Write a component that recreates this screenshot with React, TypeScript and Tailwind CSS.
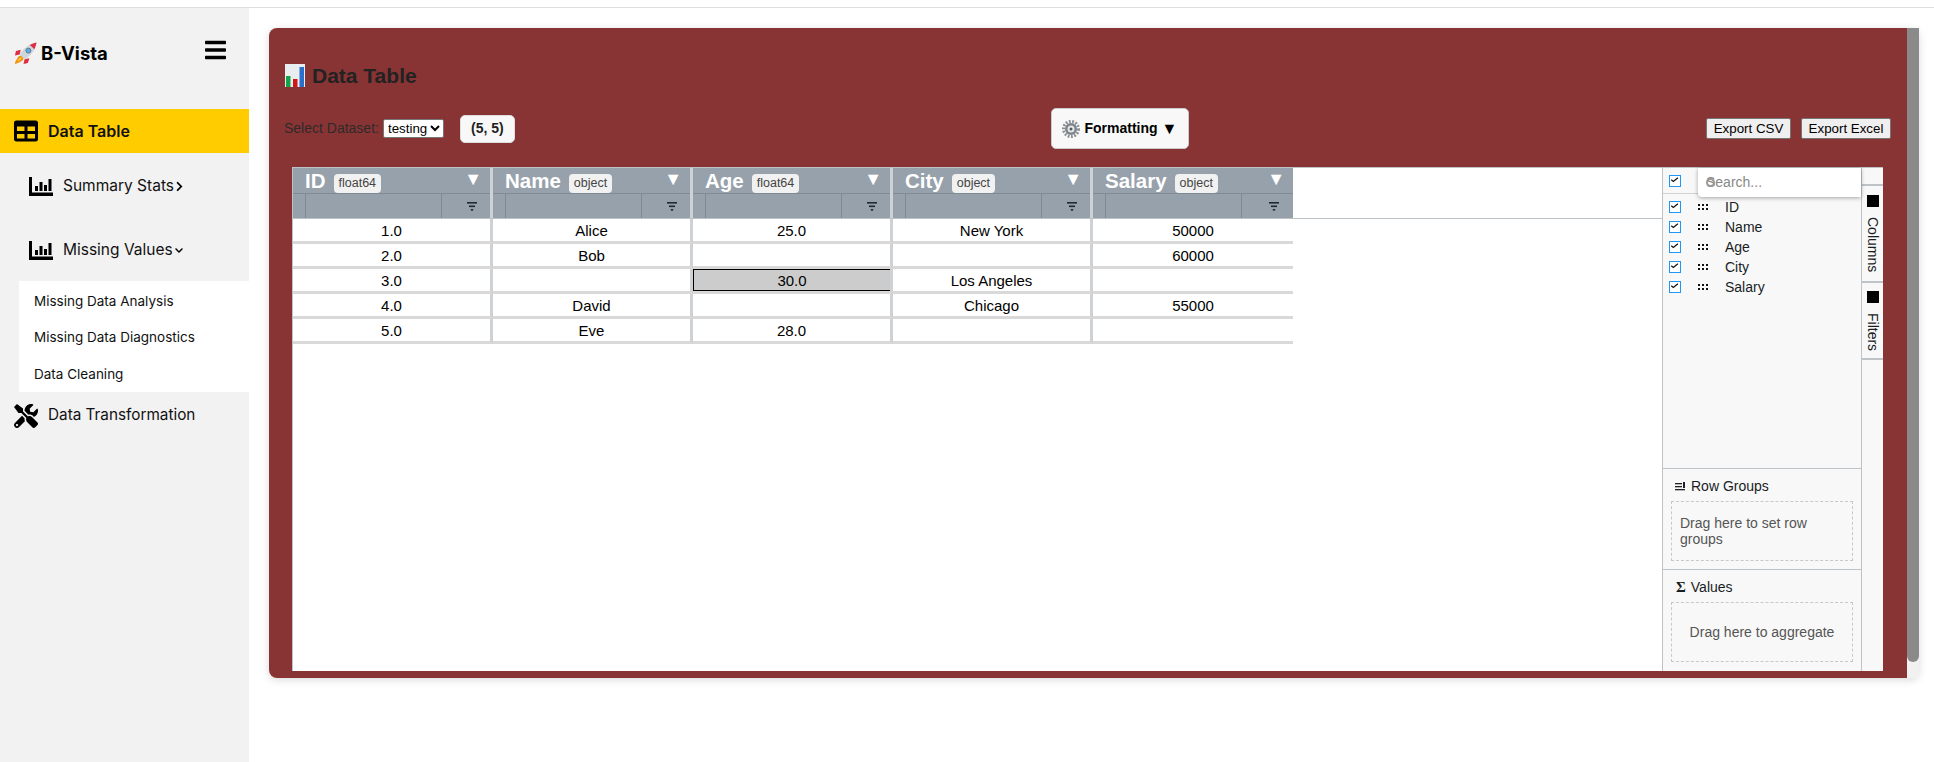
import { FaBars, FaTable, FaTools, FaChevronRight, FaChevronDown } from 'react-icons/fa'

const columns = [
  { name: 'ID', type: 'float64' },
  { name: 'Name', type: 'object' },
  { name: 'Age', type: 'float64' },
  { name: 'City', type: 'object' },
  { name: 'Salary', type: 'object' },
]

const rows = [
  ['1.0', 'Alice', '25.0', 'New York', '50000'],
  ['2.0', 'Bob', '', '', '60000'],
  ['3.0', '', '30.0', 'Los Angeles', ''],
  ['4.0', 'David', '', 'Chicago', '55000'],
  ['5.0', 'Eve', '28.0', '', ''],
]

function RocketIcon() {
  return (
    <svg viewBox="0 0 24 24" className="w-[23px] h-[23px]">
      <path d="M3 18 C4 15 6 14 8 14 L10 16 C10 19 8 21 1 23 C1 21 2 19 3 18 Z" fill="#f4900c" />
      <path d="M4.500 18.500 C5.500 17 6.500 16.500 8 16 C8 18 6.500 19.500 3.500 20.500 Z" fill="#ffcc4d" />
      <path d="M7 8 L2 9.500 L1 14 L6 13 Z" fill="#dd2e44" />
      <path d="M16 17 L14.500 22 L10 23 L11 18 Z" fill="#dd2e44" />
      <path d="M6 13 C9 7 15 2.500 23.500 0.500 C22 9 17 15 11 18 Z" fill="#ccd6dd" />
      <path d="M16.500 3 C18.500 2 21 1 23.500 0.500 C23 3 22.300 5.500 21.300 7.500 Z" fill="#dd2e44" />
      <circle cx="15" cy="9" r="2.600" fill="#55acee" stroke="#66757f" strokeWidth="1" />
    </svg>
  )
}

function BarsIcon() {
  return (
    <svg viewBox="0 0 24 19" className="w-[24px] h-[19px]" fill="#000">
      <path d="M0 0h3v15.500H24V19H0z" />
      <rect x="6" y="9" width="3" height="5" />
      <rect x="10.500" y="5" width="3" height="9" />
      <rect x="15" y="8" width="3" height="6" />
      <rect x="19.500" y="2" width="3" height="12" />
    </svg>
  )
}

function ChartEmoji() {
  return (
    <svg viewBox="0 0 20 23" className="w-[20px] h-[23px]">
      <rect width="20" height="23" fill="#e8edf0" />
      <rect x="1" y="12" width="4.500" height="11" fill="#16a34a" />
      <rect x="8" y="15" width="4.500" height="8" fill="#d01818" />
      <rect x="14.500" y="3" width="4.500" height="20" fill="#2a6fc9" />
    </svg>
  )
}

function GearEmoji() {
  return (
    <svg viewBox="0 0 18 18" className="w-[18px] h-[18px]">
      <circle cx="9" cy="9" r="7.500" fill="none" stroke="#8a9096" strokeWidth="3" strokeDasharray="1.800 1.500" />
      <circle cx="9" cy="9" r="6" fill="#7d848a" />
      <circle cx="9" cy="9" r="3.500" fill="#e4e6e8" />
      <circle cx="9" cy="9" r="1.500" fill="#555b60" />
    </svg>
  )
}

function FilterIcon() {
  return (
    <svg viewBox="0 0 10 9" className="w-[10px] h-[9px]" fill="#1f2933">
      <rect x="0" y="0" width="10" height="1.600" />
      <rect x="2" y="3.500" width="6" height="1.600" />
      <rect x="3.800" y="7" width="2.400" height="1.600" />
    </svg>
  )
}

function GripIcon() {
  return (
    <svg viewBox="0 0 10 6" className="w-[10px] h-[6px]" fill="#111">
      {[0, 4, 8].map((x) => (
        <g key={x}>
          <rect x={x} y="0" width="2" height="2" />
          <rect x={x} y="4" width="2" height="2" />
        </g>
      ))}
    </svg>
  )
}

function Checkbox() {
  return (
    <span className="w-[12px] h-[12px] border border-[#2196f3] bg-white flex items-center justify-center shrink-0">
      <svg viewBox="0 0 12 12" className="w-[12px] h-[12px]" fill="none" stroke="#111" strokeWidth="1.500">
        <path d="M1.500 4.500 L4 6.500 L9.500 2" />
      </svg>
    </span>
  )
}

function Sidebar() {
  return (
    <aside className="w-[249px] h-[754px] shrink-0 bg-[#f2f2f2] font-['Inter',sans-serif] text-[#111]">
      <div className="h-[101px] pl-[14px] pr-[23px] flex items-start justify-between">
        <div className="flex items-center gap-[4px] mt-[32px]">
          <RocketIcon />
          <span className="text-[18.500px] font-bold text-black">B-Vista</span>
        </div>
        <FaBars className="w-[21px] h-[24px] mt-[30px] text-black" />
      </div>
      <div className="h-[44px] bg-[#ffcc00] pl-[14px] flex items-center gap-[10px] font-semibold text-[16px]">
        <FaTable className="w-[24px] h-[24px] text-black" />
        Data Table
      </div>
      <div className="h-[64px] pl-[29px] pt-[2px] flex items-center gap-[10px] text-[15.500px]">
        <BarsIcon />
        <span>Summary Stats</span>
        <FaChevronRight className="w-[9px] h-[11px] -ml-[9px] text-black" />
      </div>
      <div className="h-[64px] pl-[29px] pt-[2px] flex items-center gap-[10px] text-[15.500px]">
        <BarsIcon />
        <span>Missing Values</span>
        <FaChevronDown className="w-[10px] h-[9px] -ml-[9px] text-black" />
      </div>
      <div className="ml-[19px] h-[111px] bg-white pl-[15px] flex flex-col justify-around pt-[2px] text-[13.500px]">
        <div>Missing Data Analysis</div>
        <div>Missing Data Diagnostics</div>
        <div>Data Cleaning</div>
      </div>
      <div className="h-[44px] pl-[14px] pt-[3px] flex items-center gap-[10px] text-[15.300px]">
        <FaTools className="w-[24px] h-[24px] text-black" />
        Data Transformation
      </div>
    </aside>
  )
}

function Toolbar() {
  return (
    <div className="h-[41px] pl-[15px] pr-[16px] flex items-center mt-[17px] text-[14px]">
      <label className="text-[#2e2a2a]">Select Dataset:</label>
      <select className="ml-[4px] h-[19px] w-[61px] bg-white text-black text-[13.330px] rounded-[2px] border border-[#767676]">
        <option>testing</option>
      </select>
      <span className="ml-[16px] w-[55px] h-[28px] bg-[#f8f8f8] rounded-[5px] border border-[#ddd] flex items-center justify-center font-bold text-[14px] text-[#222]">
        (5, 5)
      </span>
      <button className="ml-[536px] w-[138px] h-[41px] bg-[#f8f8f8] rounded-[5px] border border-[#ccc] flex items-center justify-center gap-[4px] font-bold text-[14px] text-black">
        <GearEmoji />
        Formatting
        <span className="text-[16px] leading-none">▼</span>
      </button>
      <div className="ml-auto flex gap-[10px]">
        <button className="w-[85px] h-[21px] bg-[#efefef] border border-[#767676] rounded-[2px] text-[13.330px] text-black flex items-center justify-center">
          Export CSV
        </button>
        <button className="w-[90px] h-[21px] bg-[#efefef] border border-[#767676] rounded-[2px] text-[13.330px] text-black flex items-center justify-center">
          Export Excel
        </button>
      </div>
    </div>
  )
}

function Table() {
  return (
    <div className="flex-1 min-w-0 bg-white">
      <div className="h-[51px] border-b border-[#bdc3c7] flex">
        {columns.map((col, i) => (
          <div key={col.name} className={`w-[200px] shrink-0 bg-[#97a1ab] flex flex-col ${i < 4 ? 'border-r-[3px] border-[#cfd2d5]' : ''}`}>
            <div className="h-[26px] border-b border-[#7f8a95] pl-[12px] pr-[8px] pt-[2px] flex items-center">
              <span className="text-[20.500px] font-bold text-white">{col.name}</span>
              <span className="ml-[8px] mt-[3px] h-[19px] px-[5px] bg-[#f1f1f1] rounded-[4px] text-[12.500px] text-[#444] flex items-center">{col.type}</span>
              <span className="ml-auto mb-[6px] text-[18px] leading-none text-white">▼</span>
            </div>
            <div className="flex-1 flex">
              <div className="w-[13px] border-r border-[#7f8a95]" />
              <div className="w-[136px] border-r border-[#7f8a95]" />
              <div className="flex-1 flex items-center justify-center pl-[12px]">
                <FilterIcon />
              </div>
            </div>
          </div>
        ))}
      </div>
      {rows.map((row, r) => (
        <div key={row[0]} className="flex">
          {row.map((cell, c) => (
            <div
              key={c}
              className={`w-[200px] h-[25px] shrink-0 border-b-[3px] border-[#d9d9d9] ${c < 4 ? 'border-r-[3px] border-r-[#cfd2d5]' : ''} flex items-center justify-center`}
            >
              {r === 2 && c === 2 ? (
                <div className="w-full h-full pt-[2px] bg-[#cccccc] border-y border-l border-black flex items-center justify-center">{cell}</div>
              ) : (
                <span className="pt-[2px]">{cell}</span>
              )}
            </div>
          ))}
        </div>
      ))}
    </div>
  )
}

function ColumnsPanel() {
  return (
    <div className="w-[200px] shrink-0 bg-[#f8f8f8] border-x border-[#bdc3c7] flex flex-col relative text-[14px] text-[#181d1f]">
      <div className="h-[26px] border-b border-[#d0d3d6] pl-[6px] flex items-center">
        <Checkbox />
      </div>
      {/* search box sits over the panel header */}
      <div className="absolute left-[35px] right-0 top-0 h-[29px] bg-white rounded-bl-[4px] shadow-[0_1px_4px_rgba(0,0,0,0.35)] flex items-center pl-[8px] text-[14px] text-[#888]">
        Search...
        <span className="absolute left-[8px] w-[9px] h-[9px] rounded-full border-[2px] border-[#999]" />
      </div>
      <div className="pt-[3px] flex-1">
        {columns.map((col) => (
          <div key={col.name} className="h-[20px] pl-[6px] flex items-center">
            <Checkbox />
            <span className="ml-[17px]"><GripIcon /></span>
            <span className="ml-[17px]">{col.name}</span>
          </div>
        ))}
      </div>
      <div className="h-[101px] border-t border-[#bdc3c7] px-[8px] pt-[7px]">
        <div className="h-[20px] pl-[4px] flex items-center gap-[5px]">
          <svg viewBox="0 0 11 9" className="w-[11px] h-[9px]" fill="#222">
            <rect x="0" y="1" width="7" height="1.300" />
            <rect x="0" y="4" width="7" height="1.300" />
            <rect x="0" y="7" width="10" height="1.300" />
            <rect x="8" y="0" width="2" height="6" />
          </svg>
          Row Groups
        </div>
        <div className="mt-[5px] h-[60px] border border-dashed border-[#c8c8c8] px-[8px] flex items-center text-[#555] leading-[16px]">
          Drag here to set row groups
        </div>
      </div>
      <div className="h-[102px] border-t border-[#bdc3c7] px-[8px] pt-[7px]">
        <div className="h-[20px] pl-[5px] flex items-center gap-[5px]">
          <span className="font-['Liberation_Serif',serif] font-bold text-[15px]">Σ</span>
          Values
        </div>
        <div className="mt-[5px] h-[60px] border border-dashed border-[#c8c8c8] flex items-center justify-center text-[#555]">
          Drag here to aggregate
        </div>
      </div>
    </div>
  )
}

function SideTabs() {
  return (
    <div className="w-[21px] shrink-0 bg-[#f8f8f8] pt-[16px] text-[14px] text-[#181d1f]">
      <div className="h-[97px] border-t-[2px] border-[#bdc3c7] flex flex-col items-center pt-[9px] gap-[10px]">
        <span className="w-[12px] h-[12px] bg-black" />
        <span className="[writing-mode:vertical-rl] leading-none">Columns</span>
      </div>
      <div className="h-[79px] border-y-[2px] border-[#bdc3c7] flex flex-col items-center pt-[8px] gap-[10px]">
        <span className="w-[12px] h-[12px] bg-black" />
        <span className="[writing-mode:vertical-rl] leading-none">Filters</span>
      </div>
    </div>
  )
}

export default function App() {
  return (
    <div className="h-[762px] overflow-hidden bg-white font-['Liberation_Sans',sans-serif]">
      <div className="h-[8px] border-b border-[#dddddd]" />
      <div className="flex">
        <Sidebar />
        <main className="flex-1 min-w-0 pl-[20px] pr-[15px] pt-[20px]">
          <div className="h-[650px] flex rounded-[8px] shadow-[0_2px_8px_rgba(0,0,0,0.15)]">
            <section className="flex-1 min-w-0 bg-[#893434] rounded-l-[8px] flex flex-col">
              <div className="h-[31px] mt-[32px] pl-[16px] flex items-center gap-[7px]">
                <ChartEmoji />
                <h2 className="text-[21px] font-bold text-[#222]">Data Table</h2>
              </div>
              <Toolbar />
              <div className="mt-[18px] ml-[23px] mr-[24px] h-[504px] border-t border-l border-[#bdc3c7] bg-white flex text-[15px] text-black">
                <Table />
                <ColumnsPanel />
                <SideTabs />
              </div>
            </section>
            <div className="w-[12px] shrink-0 bg-[#f1f1f1] rounded-r-[8px]">
              <div className="h-[634px] bg-[#8a8a8a] rounded-b-[6px]" />
            </div>
          </div>
        </main>
      </div>
    </div>
  )
}
